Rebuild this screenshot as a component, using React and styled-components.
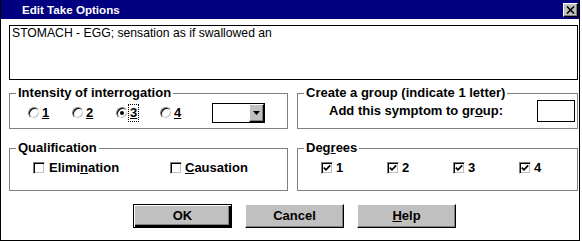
import React from "react";
import styled, { createGlobalStyle } from "styled-components";

const Global = createGlobalStyle`
  html, body { margin: 0; padding: 0; background: #fff; }
  body { font-family: "Liberation Sans", Arial, sans-serif; color: #000; }
`;

const Dialog = styled.div`
  box-sizing: border-box;
  width: 580px;
  height: 241px;
  border: 1px solid #000;
  border-top: none;
  background: #fff;
  display: flex;
  flex-direction: column;
`;

const TitleBar = styled.div`
  box-sizing: border-box;
  height: 19px;
  background: #000080;
  display: flex;
  align-items: flex-start;
  padding: 0 1px 0 21px;
`;

const TitleText = styled.div`
  flex: 1;
  color: #fff;
  font-weight: bold;
  font-size: 11.6px;
  line-height: 19px;
`;

const CloseButton = styled.div`
  box-sizing: border-box;
  margin-top: 3px;
  width: 15px;
  height: 14px;
  background: #c0c0c0;
  border: 1px solid;
  border-color: #fff #000 #000 #fff;
  box-shadow: inset -1px -1px 0 #808080;
  display: flex;
  align-items: center;
  justify-content: center;
`;

const Body = styled.div`
  display: flex;
  flex-direction: column;
  padding: 6px 1px 0 8px;
`;

const TextBox = styled.div`
  box-sizing: border-box;
  height: 55px;
  border: 1px solid #000;
  padding: 0 2px;
  font-size: 12.2px;
  line-height: 14px;
`;

const Groups = styled.div`
  display: grid;
  grid-template-columns: 279px 281px;
  grid-template-rows: 43px 50px;
  column-gap: 9px;
  row-gap: 12px;
  margin-top: 6px;
`;

const Group = styled.fieldset`
  box-sizing: border-box;
  margin: 0;
  padding: 0;
  min-width: 0;
  border: 1px solid #808080;
`;

const Legend = styled.legend`
  margin-left: 6px;
  padding: 0 2px;
  font-weight: bold;
  font-size: 13px;
  line-height: 14px;
`;

const Row = styled.div`
  display: flex;
  align-items: center;
  height: ${(p) => p.$h}px;
  margin-top: ${(p) => p.$top}px;
  padding-left: ${(p) => p.$left}px;
  padding-right: ${(p) => p.$right || 0}px;
`;

const Option = styled.div`
  display: flex;
  align-items: center;
  gap: ${(p) => p.$gap}px;
  width: ${(p) => p.$w}px;
  flex: none;
  font-weight: bold;
  font-size: 13px;
  line-height: 14px;
`;

const Radio = styled.span`
  box-sizing: border-box;
  position: relative;
  width: 12px;
  height: 12px;
  border-radius: 50%;
  background: #fff;
  border: 1px solid;
  border-color: #808080 #fff #fff #808080;
  box-shadow: inset 1px 1px 0 #000, inset -1px -1px 0 #c0c0c0;
  flex: none;
  &::after {
    content: "";
    display: ${(p) => (p.$checked ? "block" : "none")};
    position: absolute;
    left: 3px;
    top: 3px;
    width: 4px;
    height: 4px;
    border-radius: 50%;
    background: #000;
  }
`;

const Check = styled.span`
  box-sizing: border-box;
  width: 12px;
  height: 12px;
  background: #fff;
  border: 1px solid;
  border-color: #808080 #fff #fff #808080;
  box-shadow: inset 1px 1px 0 #000, inset -1px -1px 0 #c0c0c0;
  flex: none;
  display: flex;
  align-items: center;
  justify-content: center;
`;

const Focus = styled.span`
  outline: 1px dotted #000;
  outline-offset: 1px;
`;

const U = styled.span`
  text-decoration: underline;
  text-underline-offset: 1px;
`;

const Combo = styled.div`
  box-sizing: border-box;
  width: 53px;
  height: 20px;
  margin-left: 8px;
  border: 1px solid #000;
  background: #fff;
  display: flex;
  justify-content: flex-end;
  flex: none;
`;

const ComboButton = styled.div`
  box-sizing: border-box;
  width: 15px;
  height: 18px;
  background: #c0c0c0;
  border: 1px solid;
  border-color: #fff #000 #000 #fff;
  box-shadow: inset -1px -1px 0 #808080;
  display: flex;
  align-items: center;
  justify-content: center;
`;

const Label = styled.span`
  font-weight: bold;
  font-size: 13px;
  line-height: 14px;
`;

const LetterBox = styled.div`
  box-sizing: border-box;
  width: 38px;
  height: 22px;
  margin-left: auto;
  border: 1px solid #000;
  background: #fff;
`;

const Buttons = styled.div`
  display: flex;
  gap: 13px;
  margin-top: 13px;
  padding-left: 124px;
`;

const Button = styled.div`
  box-sizing: border-box;
  width: 99px;
  height: 24px;
  background: #c0c0c0;
  border: 1px solid;
  border-color: ${(p) => (p.$default ? "#000" : "#fff #000 #000 #fff")};
  box-shadow: ${(p) =>
    p.$default
      ? "inset 1px 1px 0 #fff, inset -2px -2px 0 #000, inset -3px -3px 0 #808080"
      : "inset -1px -1px 0 #808080"};
  display: flex;
  align-items: center;
  justify-content: center;
  font-weight: bold;
  font-size: 13px;
  line-height: 14px;
`;

const CheckMark = () => (
  <svg width="8" height="8" viewBox="0 0 8 8">
    <polyline points="0.8,3.6 3,5.8 7.2,1.4" fill="none" stroke="#000" strokeWidth="1.7" />
  </svg>
);

const radios = ["1", "2", "3", "4"];
const degrees = ["1", "2", "3", "4"];

export default function App() {
  return (
    <>
      <Global />
      <Dialog>
        <TitleBar>
          <TitleText>Edit Take Options</TitleText>
          <CloseButton>
            <svg width="9" height="8" viewBox="0 0 9 8">
              <path d="M1 0.5 L8 7.5 M8 0.5 L1 7.5" stroke="#000" strokeWidth="1.6" />
            </svg>
          </CloseButton>
        </TitleBar>
        <Body>
          <TextBox>STOMACH - EGG; sensation as if swallowed an</TextBox>
          <Groups>
            <Group>
              <Legend>Intensity of interrogation</Legend>
              <Row $h={20} $top={3} $left={18}>
                {radios.map((r) => (
                  <Option key={r} $w={44} $gap={2}>
                    <Radio $checked={r === "3"} />
                    {r === "3" ? (
                      <Focus>
                        <U>{r}</U>
                      </Focus>
                    ) : (
                      <U>{r}</U>
                    )}
                  </Option>
                ))}
                <Combo>
                  <ComboButton>
                    <svg width="7" height="4" viewBox="0 0 7 4">
                      <polygon points="0,0 7,0 3.5,4" fill="#000" />
                    </svg>
                  </ComboButton>
                </Combo>
              </Row>
            </Group>
            <Group>
              <Legend>Create a group (indicate 1 letter)</Legend>
              <Row $h={22} $top={0} $left={31} $right={2}>
                <Label>
                  Add this symptom to gr<U>o</U>up:
                </Label>
                <LetterBox />
              </Row>
            </Group>
            <Group>
              <Legend>Qualification</Legend>
              <Row $h={14} $top={6} $left={23}>
                <Option $w={137} $gap={4}>
                  <Check />
                  <span>
                    Elimi<U>n</U>ation
                  </span>
                </Option>
                <Option $w={100} $gap={3}>
                  <Check />
                  <span>
                    <U>C</U>ausation
                  </span>
                </Option>
              </Row>
            </Group>
            <Group>
              <Legend>
                Deg<U>r</U>ees
              </Legend>
              <Row $h={14} $top={6} $left={23}>
                {degrees.map((d) => (
                  <Option key={d} $w={66} $gap={3}>
                    <Check>
                      <CheckMark />
                    </Check>
                    <span>{d}</span>
                  </Option>
                ))}
              </Row>
            </Group>
          </Groups>
          <Buttons>
            <Button $default>OK</Button>
            <Button>Cancel</Button>
            <Button>
              <span>
                <U>H</U>elp
              </span>
            </Button>
          </Buttons>
        </Body>
      </Dialog>
    </>
  );
}
